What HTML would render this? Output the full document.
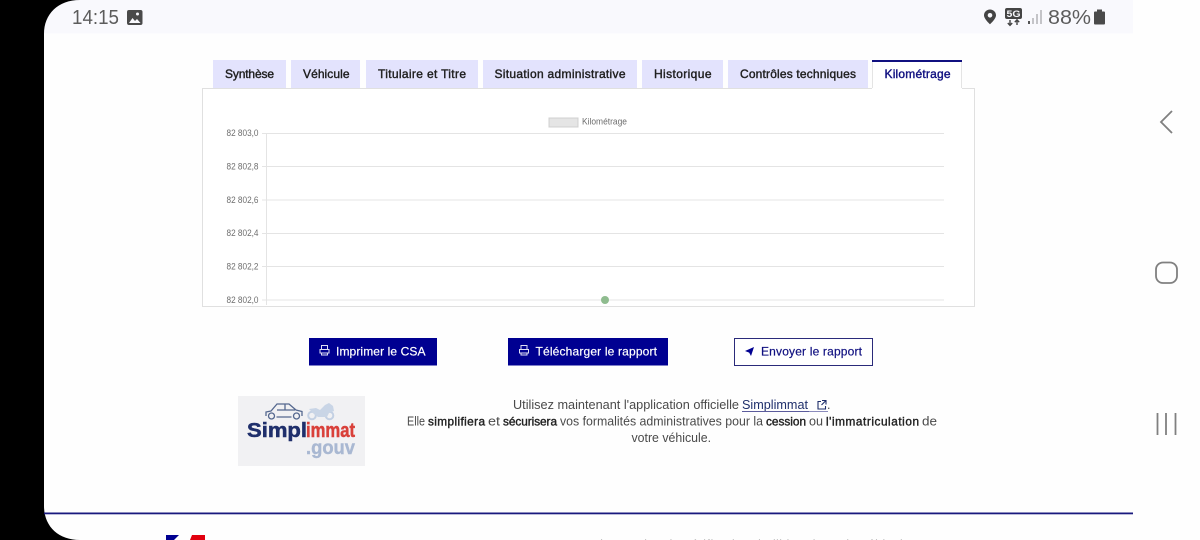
<!DOCTYPE html>
<html lang="fr">
<head>
<meta charset="utf-8">
<title>Kilométrage</title>
<style>
html,body{margin:0;padding:0;width:1200px;height:540px;overflow:hidden;background:#fff}
svg{display:block;position:absolute;left:0;top:0}
text{font-family:"Liberation Sans",sans-serif}
.tab{font-size:12px;fill:#1e1e1e;stroke:#1e1e1e;stroke-width:.4px}
.ax{font-size:9px;fill:#6e6e6e}
.b{font-size:12.5px;fill:#4a4a4a}
.bb{font-size:11.8px;fill:#222;stroke:#222;stroke-width:.4px}
.btn{font-size:12px;fill:#fff;stroke:#fff;stroke-width:.2px}
</style>
</head>
<body>
<svg width="1200" height="540" viewBox="0 0 1200 540" xmlns="http://www.w3.org/2000/svg">
<rect width="1200" height="540" fill="#fefefe"/>
<!-- status bar -->
<rect x="44" y="0" width="1089" height="33.5" fill="#f9f9fd"/>
<!-- black bezel with rounded corners -->
<path d="M0 0H80C58 0 44 14 44 34V506C44 526 58 540 80 540H0Z" fill="#000"/>
<text x="72" y="24" font-size="20.500" fill="#5c5c5c" textLength="47" lengthAdjust="spacingAndGlyphs">14:15</text>
<rect x="127" y="10" width="15.500" height="15" rx="2" fill="#4a4a4a"/>
<path d="M129 23l3.500-5 2.500 3 2-2 3.500 4z" fill="#f9f9fd"/>
<circle cx="137.500" cy="14" r="1.500" fill="#f9f9fd"/>
<!-- right status icons -->
<path d="M990 9.500c-3.400 0-6 2.600-6 5.800 0 3.800 6 9 6 9s6-5.200 6-9c0-3.200-2.600-5.800-6-5.800z" fill="#444"/>
<circle cx="990" cy="15.300" r="2.300" fill="#f9f9fd"/>
<rect x="1005" y="8" width="17" height="11" rx="2" fill="#444"/>
<text x="1006.500" y="17" font-size="9" font-weight="700" fill="#f9f9fd" textLength="14" lengthAdjust="spacingAndGlyphs">5G</text>
<path d="M1010 20v5M1007.800 23l2.200 2.400 2.200-2.400M1017 25v-5M1014.800 22.200l2.200-2.400 2.200 2.400" stroke="#444" stroke-width="1.400" fill="none"/>
<rect x="1028" y="21" width="2" height="3" fill="#555"/>
<rect x="1032" y="18" width="2" height="6" fill="#c4c4c8"/>
<rect x="1036" y="14" width="2" height="10" fill="#c4c4c8"/>
<rect x="1040" y="10" width="2" height="14" fill="#c4c4c8"/>
<text x="1048" y="24" font-size="20.500" fill="#5c5c5c" textLength="43" lengthAdjust="spacingAndGlyphs">88%</text>
<rect x="1094" y="11.500" width="11" height="13" rx="1" fill="#4a4a4a"/>
<rect x="1097" y="9.500" width="5" height="2" fill="#4a4a4a"/>
<!-- tabs -->
<g fill="#e3e3fd">
<rect x="213" y="60" width="73" height="28"/>
<rect x="291" y="60" width="69" height="28"/>
<rect x="366" y="60" width="112" height="28"/>
<rect x="483" y="60" width="154" height="28"/>
<rect x="642" y="60" width="81" height="28"/>
<rect x="728" y="60" width="140" height="28"/>
</g>
<rect x="202.500" y="88.500" width="772" height="218" fill="#fff" stroke="#e0e0e0"/>
<rect x="872" y="60" width="90" height="29" fill="#fff"/>
<path d="M872.500 88V61M961.500 88V61" stroke="#e4e4e4" fill="none"/>
<rect x="872" y="60" width="90" height="2" fill="#101080"/>
<text class="tab" x="225" y="78" textLength="49" lengthAdjust="spacing">Synthèse</text>
<text class="tab" x="303" y="78" textLength="46.500" lengthAdjust="spacing">Véhicule</text>
<text class="tab" x="378" y="78" textLength="88" lengthAdjust="spacing">Titulaire et Titre</text>
<text class="tab" x="494.500" y="78" textLength="131" lengthAdjust="spacing">Situation administrative</text>
<text class="tab" x="654" y="78" textLength="57.500" lengthAdjust="spacing">Historique</text>
<text class="tab" x="740" y="78" textLength="116" lengthAdjust="spacing">Contrôles techniques</text>
<text class="tab" x="884.500" y="78" textLength="66" lengthAdjust="spacing" style="fill:#101080;stroke:#101080">Kilométrage</text>
<!-- chart -->
<rect x="549" y="118" width="29" height="9" fill="#e5e5e5" stroke="#d0d0d0"/>
<text x="582" y="124.500" font-size="9" fill="#6e6e6e" textLength="45" lengthAdjust="spacingAndGlyphs">Kilométrage</text>
<path d="M262 133.500H944M262 166.500H944M262 200H944M262 233.500H944M262 266.500H944M262 300H944M266.500 133V305" stroke="#e4e4e4" fill="none"/>
<text class="ax" x="226.500" y="136" textLength="32" lengthAdjust="spacingAndGlyphs">82 803,0</text>
<text class="ax" x="226.500" y="169.500" textLength="32" lengthAdjust="spacingAndGlyphs">82 802,8</text>
<text class="ax" x="226.500" y="203" textLength="32" lengthAdjust="spacingAndGlyphs">82 802,6</text>
<text class="ax" x="226.500" y="236" textLength="32" lengthAdjust="spacingAndGlyphs">82 802,4</text>
<text class="ax" x="226.500" y="269.500" textLength="32" lengthAdjust="spacingAndGlyphs">82 802,2</text>
<text class="ax" x="226.500" y="303" textLength="32" lengthAdjust="spacingAndGlyphs">82 802,0</text>
<circle cx="605" cy="300" r="4" fill="#8fbc8f"/>
<!-- buttons -->
<rect x="309" y="338" width="128" height="27.500" fill="#000091"/>
<rect x="508" y="338" width="160" height="27.500" fill="#000091"/>
<rect x="734.500" y="338.500" width="138" height="27" fill="#fff" stroke="#2a2a7a"/>
<g fill="none" stroke="#dfdff5" stroke-width="1">
<path d="M321.500 349v-3.500h6v3.500M320 349.500h9v3.500h-9zM321.500 353v2h6v-2"/>
<path d="M521 349v-3.500h6v3.500M519.500 349.500h9v3.500h-9zM521 353v2h6v-2"/>
</g>
<text class="btn" x="336" y="355.500" textLength="89.500" lengthAdjust="spacing">Imprimer le CSA</text>
<text class="btn" x="535.500" y="355.500" textLength="121.500" lengthAdjust="spacing">Télécharger le rapport</text>
<path d="M745 351l9-4-3 9-1.800-3.400z" fill="#000091"/>
<text class="btn" x="761" y="355.500" textLength="101" lengthAdjust="spacing" style="fill:#101080;stroke:#101080">Envoyer le rapport</text>
<!-- logo -->
<rect x="238" y="396" width="127" height="70" fill="#f1f1f3"/>
<g fill="none" stroke="#55688f" stroke-width="1.300">
<path d="M266 416v-4l5-1 6-7h12l7 6 6 1.500v4.500M277 410h18M285 404v6M276.500 417h15"/>
<circle cx="271.500" cy="416" r="3"/>
<circle cx="296.500" cy="416" r="3"/>
</g>
<g fill="none" stroke="#c3d0e3" stroke-width="2">
<circle cx="312" cy="415.500" r="3.800"/>
<circle cx="329.500" cy="415.500" r="3.800"/>
</g>
<path d="M309 409l7-1 4 2 5-5 4-2 4 3 1 5-5 2-2 4h-9l-4-3z" fill="#c9d5e6"/>
<text x="247" y="437" font-size="20" font-weight="700" fill="#1f2f6b" stroke="#1f2f6b" stroke-width=".5" textLength="60" lengthAdjust="spacingAndGlyphs">Simpl</text>
<text x="306" y="437" font-size="20" font-weight="700" fill="#d9403a" stroke="#d9403a" stroke-width=".5" textLength="49" lengthAdjust="spacingAndGlyphs">immat</text>
<text x="306" y="454" font-size="19" font-weight="700" fill="#a9b8d2" stroke="#a9b8d2" stroke-width=".4" textLength="49" lengthAdjust="spacingAndGlyphs">.gouv</text>
<!-- message -->
<text class="b" x="513" y="409" textLength="226" lengthAdjust="spacingAndGlyphs">Utilisez maintenant l'application officielle</text>
<text class="b" x="742" y="409" textLength="66" lengthAdjust="spacingAndGlyphs" style="fill:#1f2f6b">Simplimmat</text>
<rect x="742" y="411" width="67" height="1" fill="#5b5b9c"/>
<rect x="809" y="411" width="19" height="1" fill="#8b8bbc"/>
<path d="M821 401.500h-3v7.500h7.500v-3M822 400.500h4v4M826 400.500l-4.500 4.500" fill="none" stroke="#1f2f6b" stroke-width="1.100"/>
<text class="b" x="827" y="409">.</text>
<text class="b" x="407" y="425.500" textLength="18" lengthAdjust="spacingAndGlyphs">Elle</text>
<text class="bb" x="428" y="425.500" textLength="57" lengthAdjust="spacing">simplifiera</text>
<text class="b" x="488" y="425.500" textLength="12" lengthAdjust="spacingAndGlyphs">et</text>
<text class="bb" x="503" y="425.500" textLength="54" lengthAdjust="spacing">sécurisera</text>
<text class="b" x="560" y="425.500" textLength="203" lengthAdjust="spacingAndGlyphs">vos formalités administratives pour la</text>
<text class="bb" x="766" y="425.500" textLength="40" lengthAdjust="spacing">cession</text>
<text class="b" x="809" y="425.500" textLength="14" lengthAdjust="spacingAndGlyphs">ou</text>
<text class="bb" x="826" y="425.500" textLength="93" lengthAdjust="spacing">l'immatriculation</text>
<text class="b" x="922" y="425.500" textLength="15" lengthAdjust="spacingAndGlyphs">de</text>
<text class="b" x="631.500" y="442" textLength="79.500" lengthAdjust="spacingAndGlyphs">votre véhicule.</text>
<!-- footer -->
<rect x="44" y="512.500" width="1089" height="1.800" fill="#1a1a7e"/>
<path d="M166 540v-5h13l-5 5z" fill="#000091"/>
<path d="M190 540l2-5h13v5z" fill="#e1000f"/>
<text x="600" y="548" font-size="12" fill="#8a8a8a" textLength="310" lengthAdjust="spacing">Le service de vérification de l'historique du véhicule</text>
<!-- nav -->
<path d="M1172 111l-11 11 11 11" fill="none" stroke="#808080" stroke-width="1.800"/>
<rect x="1156" y="262.500" width="21" height="20.500" rx="7" fill="none" stroke="#808080" stroke-width="1.800"/>
<path d="M1157.500 413v22M1166 413v22M1175.500 413v22" fill="none" stroke="#808080" stroke-width="1.800"/>
</svg>
</body>
</html>
